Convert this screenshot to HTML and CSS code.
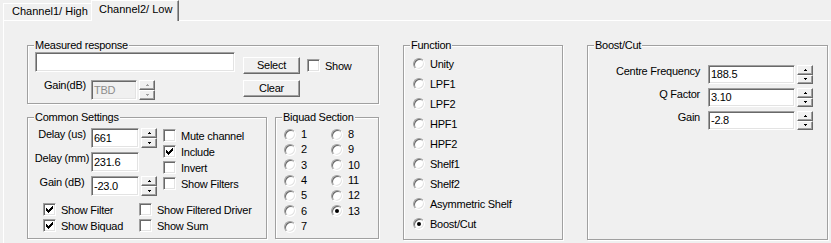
FILE: index.html
```html
<!DOCTYPE html>
<html lang="en">
<head>
<meta charset="UTF-8">
<title>Channel settings</title>
<link rel="stylesheet" href="styles.css">
</head>
<body>
<div class="tabs">
  <div class="tab">Channel1/ High</div>
  <div class="tab active">Channel2/ Low</div>
</div>
<div class="panel">
  <div class="col-left">
    <div class="group measured">
      <span class="group-title">Measured response</span>
      <div class="m-row">
        <div class="edit file"></div>
        <div class="btn select">Select</div>
        <div class="check show"><span class="box"></span>Show</div>
      </div>
      <div class="m-row second">
        <span class="lbl gain-lbl">Gain(dB)</span>
        <div class="edit tbd disabled">TBD</div>
        <div class="spin disabled"><span class="up"></span><span class="down"></span></div>
        <div class="btn clear">Clear</div>
      </div>
    </div>
    <div class="lower">
      <div class="group common">
        <span class="group-title">Common Settings</span>
        <div class="common-top">
          <div class="fields">
            <div class="field">
              <span class="lbl">Delay (us)</span>
              <div class="edit">661</div>
              <div class="spin"><span class="up"></span><span class="down"></span></div>
            </div>
            <div class="field">
              <span class="lbl">Delay (mm)</span>
              <div class="edit">231.6</div>
            </div>
            <div class="field">
              <span class="lbl">Gain (dB)</span>
              <div class="edit">-23.0</div>
              <div class="spin"><span class="up"></span><span class="down"></span></div>
            </div>
          </div>
          <div class="checks">
            <div class="check"><span class="box"></span>Mute channel</div>
            <div class="check"><span class="box"><svg viewBox="0 0 11 11"><path d="M2 4h1v3H2zM3 5h1v3H3zM4 6h1v3H4zM5 5h1v3H5zM6 4h1v3H6zM7 3h1v3H7zM8 2h1v3H8z"/></svg></span>Include</div>
            <div class="check"><span class="box"></span>Invert</div>
            <div class="check"><span class="box"></span>Show Filters</div>
          </div>
        </div>
        <div class="common-bottom">
          <div class="check"><span class="box"><svg viewBox="0 0 11 11"><path d="M2 4h1v3H2zM3 5h1v3H3zM4 6h1v3H4zM5 5h1v3H5zM6 4h1v3H6zM7 3h1v3H7zM8 2h1v3H8z"/></svg></span>Show Filter</div>
          <div class="check"><span class="box"></span>Show Filtered Driver</div>
          <div class="check"><span class="box"><svg viewBox="0 0 11 11"><path d="M2 4h1v3H2zM3 5h1v3H3zM4 6h1v3H4zM5 5h1v3H5zM6 4h1v3H6zM7 3h1v3H7zM8 2h1v3H8z"/></svg></span>Show Biquad</div>
          <div class="check"><span class="box"></span>Show Sum</div>
        </div>
      </div>
      <div class="group biquad">
        <span class="group-title">Biquad Section</span>
        <div class="biquad-grid">
          <div class="radio"><span class="rb"></span>1</div>
          <div class="radio"><span class="rb"></span>2</div>
          <div class="radio"><span class="rb"></span>3</div>
          <div class="radio"><span class="rb"></span>4</div>
          <div class="radio"><span class="rb"></span>5</div>
          <div class="radio"><span class="rb"></span>6</div>
          <div class="radio"><span class="rb"></span>7</div>
          <div class="radio"><span class="rb"></span>8</div>
          <div class="radio"><span class="rb"></span>9</div>
          <div class="radio"><span class="rb"></span>10</div>
          <div class="radio"><span class="rb"></span>11</div>
          <div class="radio"><span class="rb"></span>12</div>
          <div class="radio"><span class="rb on"></span>13</div>
        </div>
      </div>
    </div>
  </div>

  <div class="group function">
    <span class="group-title">Function</span>
    <div class="radio"><span class="rb"></span>Unity</div>
    <div class="radio"><span class="rb"></span>LPF1</div>
    <div class="radio"><span class="rb"></span>LPF2</div>
    <div class="radio"><span class="rb"></span>HPF1</div>
    <div class="radio"><span class="rb"></span>HPF2</div>
    <div class="radio"><span class="rb"></span>Shelf1</div>
    <div class="radio"><span class="rb"></span>Shelf2</div>
    <div class="radio"><span class="rb"></span>Asymmetric Shelf</div>
    <div class="radio"><span class="rb on"></span>Boost/Cut</div>
  </div>

  <div class="group boost">
    <span class="group-title">Boost/Cut</span>
    <div class="b-row">
      <span class="lbl">Centre Frequency</span>
      <div class="edit">188.5</div>
      <div class="spin"><span class="up"></span><span class="down"></span></div>
    </div>
    <div class="b-row">
      <span class="lbl">Q Factor</span>
      <div class="edit">3.10</div>
      <div class="spin"><span class="up"></span><span class="down"></span></div>
    </div>
    <div class="b-row">
      <span class="lbl">Gain</span>
      <div class="edit">-2.8</div>
      <div class="spin"><span class="up"></span><span class="down"></span></div>
    </div>
  </div>
</div>
</body>
</html>
```

FILE: styles.css
```css
body {
  margin: 0;
  height: 243px;
  overflow: hidden;
  background: #f0f0f0;
  color: #000;
  font-family: "Liberation Sans", Arial, sans-serif;
  font-size: 11px;
  line-height: 13px;
  letter-spacing: -0.25px;
}

/* tabs */
.tabs {
  display: flex;
  align-items: flex-end;
  height: 20px;
  padding-left: 3px;
  letter-spacing: 0;
}
.tab {
  box-sizing: border-box;
  width: 88px;
  height: 17px;
  padding: 1px 0 0 8px;
  border-top: 1px solid #fff;
  border-left: 1px solid #fff;
  white-space: nowrap;
}
.tab.active {
  position: relative;
  z-index: 1;
  height: 21px;
  margin-bottom: -1px;
  padding: 2px 0 0 7px;
  background: #f0f0f0;
  border-right: 1px solid #696969;
  box-shadow: inset -1px 0 #a0a0a0;
}

.panel {
  box-sizing: border-box;
  width: 828px;
  height: 223px;
  margin-left: 3px;
  padding: 24px 0 0 23px;
  border-top: 1px solid #fff;
  border-left: 1px solid #fff;
  display: flex;
  align-items: flex-start;
  gap: 24px;
}

/* group boxes */
.group {
  position: relative;
  box-sizing: border-box;
  border: 1px solid #a0a0a0;
  box-shadow: inset 1px 1px #fff, 1px 1px #fff;
}
.group-title {
  position: absolute;
  top: -7px;
  left: 6px;
  padding: 0 1px;
  background: #f0f0f0;
  white-space: nowrap;
}

/* controls */
.edit {
  box-sizing: border-box;
  height: 20px;
  padding-left: 2px;
  display: flex;
  align-items: center;
  background: #fff;
  border: 1px solid;
  border-color: #a0a0a0 #fff #fff #a0a0a0;
  box-shadow: inset 1px 1px #696969, inset -1px -1px #e3e3e3;
}
.edit.disabled {
  background: #f0f0f0;
  color: #8d8d8d;
}
.btn {
  box-sizing: border-box;
  width: 57px;
  height: 17px;
  display: flex;
  align-items: center;
  justify-content: center;
  border: 1px solid;
  border-color: #fff #696969 #696969 #fff;
  box-shadow: inset -1px -1px #a0a0a0;
}
.spin {
  width: 16px;
  height: 20px;
  display: flex;
  flex-direction: column;
}
.spin span {
  flex: 1;
  box-sizing: border-box;
  display: flex;
  align-items: center;
  justify-content: center;
  border: 1px solid;
  border-color: #fff #696969 #696969 #fff;
  box-shadow: inset -1px -1px #a0a0a0;
}
.spin span::after {
  content: "";
  width: 1px;
  height: 1px;
  background: #000;
}
.spin .up::after {
  margin-top: -1px;
  box-shadow: -1px 1px #000, 0 1px #000, 1px 1px #000;
}
.spin .down::after {
  margin-top: 1px;
  box-shadow: -1px -1px #000, 0 -1px #000, 1px -1px #000;
}
.spin.disabled span::after {
  background: #a0a0a0;
}
.spin.disabled .up::after {
  box-shadow: -1px 1px #a0a0a0, 0 1px #a0a0a0, 1px 1px #a0a0a0;
}
.spin.disabled .down::after {
  box-shadow: -1px -1px #a0a0a0, 0 -1px #a0a0a0, 1px -1px #a0a0a0;
}

.check {
  display: flex;
  align-items: flex-start;
  gap: 5px;
  height: 16px;
  line-height: 16px;
  white-space: nowrap;
}
.box {
  flex: none;
  box-sizing: border-box;
  width: 13px;
  height: 13px;
  margin-top: 1px;
  background: #fff;
  border: 1px solid;
  border-color: #a0a0a0 #fff #fff #a0a0a0;
  box-shadow: inset 1px 1px #696969, inset -1px -1px #e3e3e3;
}
.box svg {
  display: block;
  width: 11px;
  height: 11px;
  shape-rendering: crispEdges;
}

.radio {
  display: flex;
  align-items: center;
  gap: 5px;
  white-space: nowrap;
}
.rb {
  flex: none;
  box-sizing: border-box;
  width: 12px;
  height: 12px;
  display: flex;
  align-items: center;
  justify-content: center;
  border-radius: 50%;
  background: #fff;
  border: 1px solid;
  border-color: #a0a0a0 #fff #fff #a0a0a0;
  box-shadow: inset 1px 1px #696969, inset -1px -1px #e3e3e3;
}
.rb.on::after {
  content: "";
  width: 4px;
  height: 4px;
  border-radius: 50%;
  background: #000;
}

/* left column */
.col-left {
  width: 352px;
  display: flex;
  flex-direction: column;
  gap: 13px;
}
.measured {
  height: 59px;
  padding: 6px 0 0 7px;
}
.m-row {
  display: flex;
  align-items: flex-start;
}
.m-row.second {
  margin-top: 6px;
}
.file {
  width: 200px;
}
.select {
  margin: 5px 0 0 8px;
}
.show {
  margin: 6px 0 0 7px;
}
.gain-lbl {
  width: 51px;
  margin: -1px 5px 0 0;
  text-align: right;
}
.tbd {
  width: 46px;
}
.m-row .spin {
  margin-left: 2px;
}
.clear {
  margin-left: 88px;
}

.lower {
  display: flex;
  gap: 8px;
}
.common {
  width: 240px;
  height: 122px;
  padding: 10px 0 0 5px;
}
.common-top {
  display: flex;
}
.fields {
  width: 124px;
  display: flex;
  flex-direction: column;
  gap: 4px;
}
.field {
  display: flex;
  align-items: flex-start;
}
.field .lbl {
  width: 58px;
  text-align: center;
  white-space: nowrap;
}
.field .edit {
  width: 48px;
}
.field .spin {
  margin-left: 2px;
}
.checks {
  margin-left: 6px;
}
.common-bottom {
  display: grid;
  grid-template-columns: 96px auto;
  margin: 6px 0 0 10px;
}

.biquad {
  width: 104px;
  height: 122px;
  padding: 9px 0 0 8px;
}
.biquad-grid {
  display: grid;
  grid-template-rows: 15px 15px 16px 15px 15px 16px 15px;
  grid-template-columns: 47px auto;
  grid-auto-flow: column;
}

/* function */
.function {
  width: 160px;
  height: 195px;
  padding: 8px 0 0 9px;
}
.function .radio {
  height: 20px;
}

/* boost / cut */
.boost {
  width: 241px;
  height: 195px;
  padding-top: 19px;
  display: flex;
  flex-direction: column;
  gap: 4px;
}
.b-row {
  display: flex;
  align-items: flex-start;
}
.b-row .lbl {
  width: 112px;
  margin-right: 8px;
  text-align: right;
}
.b-row .edit {
  width: 87px;
  height: 19px;
}
.b-row .spin {
  height: 19px;
  margin-left: 2px;
}
```
